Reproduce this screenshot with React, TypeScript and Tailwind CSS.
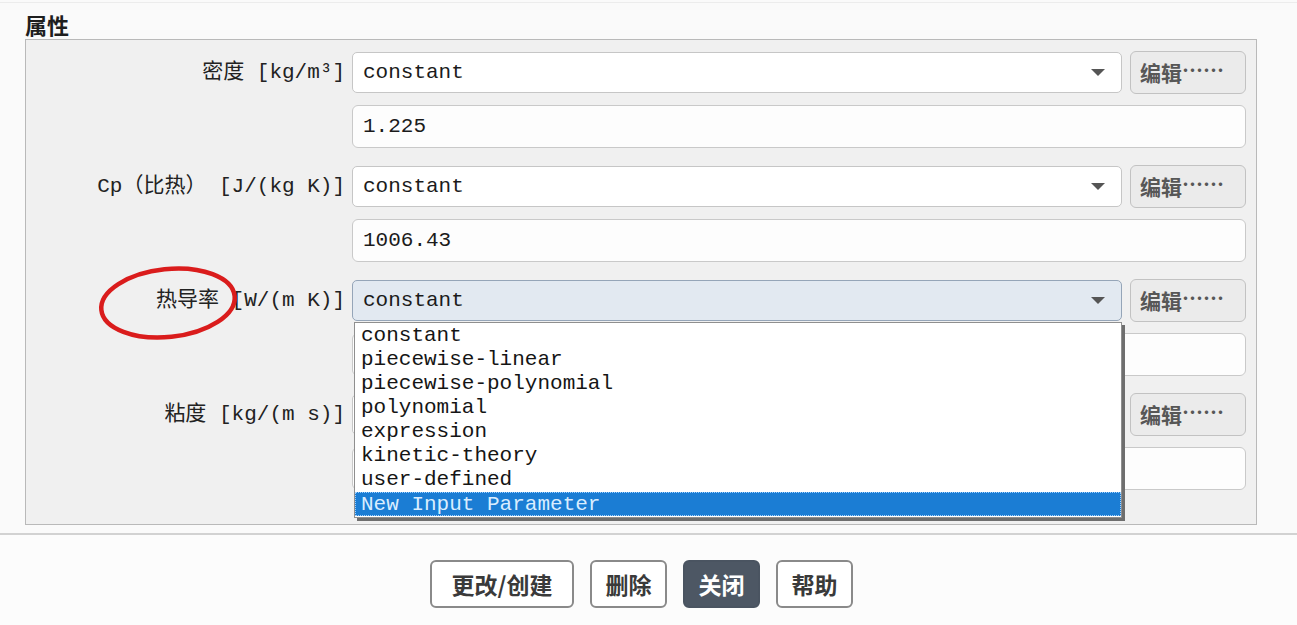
import React from "react";

const mono = { fontFamily: '"Liberation Mono", "Noto Sans CJK SC", monospace' };
const cjk = { fontFamily: '"Noto Sans CJK SC", "Liberation Sans", sans-serif' };

const options = [
  "constant",
  "piecewise-linear",
  "piecewise-polynomial",
  "polynomial",
  "expression",
  "kinetic-theory",
  "user-defined",
  "New Input Parameter",
];

const Arrow = () => (
  <svg width="16" height="9" viewBox="0 0 16 9" className="shrink-0">
    <path d="M1 1 L15 1 L8 8 Z" fill="#555" />
  </svg>
);

const SelectBox = ({ active, text = "constant" }: { active?: boolean; text?: string }) => (
  <div
    className={
      active
        ? "h-[41px] flex items-center justify-between pl-[10px] pr-[15px] rounded-[5px] border border-[#95a5b8] bg-[#e2e9f1]"
        : "h-[41px] flex items-center justify-between pl-[10px] pr-[15px] rounded-[5px] border border-[#c6c6c6] bg-white"
    }
  >
    <span className="text-[21px] text-[#1b1b1b]" style={mono}>
      {text}
    </span>
    <Arrow />
  </div>
);

const EditButton = () => (
  <button
    className="h-[43px] w-[116px] ml-[1px] flex items-center pl-[9px] rounded-[6px] border border-[#c2c2c2] bg-[#ebebeb] text-[21px] font-bold text-[#575757] leading-none"
    style={cjk}
  >
    编辑
    <span className="relative top-[-3px]">……</span>
  </button>
);

const ValueInput = ({ value }: { value: string }) => (
  <div className="col-start-2 col-span-2 h-[43px] flex items-center pl-[10px] rounded-[6px] border border-[#c9c9c9] bg-[#fdfdfd]">
    <span className="text-[21px] text-[#1b1b1b]" style={mono}>
      {value}
    </span>
  </div>
);

const Label = ({ children }: { children: React.ReactNode }) => (
  <div className="text-right text-[21px] text-[#222] whitespace-pre" style={mono}>
    {children}
  </div>
);

export default function App() {
  return (
    <div className="w-[1297px] h-[625px] overflow-hidden bg-[#fafafa] flex flex-col">
      <div className="h-[3px] border-b border-[#ececec]" />
      <div
        className="pl-[25px] pt-[6px] h-[36px] leading-[30px] text-[22px] font-bold text-[#1e1e1e]"
        style={cjk}
      >
        属性
      </div>

      {/* property group */}
      <div className="ml-[25px] w-[1232px] border border-[#b9b9b9] bg-[#f0f0f0] pt-[11px] pb-[34px] pr-[10px]">
        <div className="grid grid-cols-[319px_770px_117px] gap-x-[7px] items-center">
          <Label>密度 [kg/m³]</Label>
          <SelectBox />
          <EditButton />
          <div className="h-[11px] col-span-3" />
          <ValueInput value="1.225" />
          <div className="h-[17px] col-span-3" />

          <Label>Cp（比热） [J/(kg K)]</Label>
          <SelectBox />
          <EditButton />
          <div className="h-[11px] col-span-3" />
          <ValueInput value="1006.43" />
          <div className="h-[17px] col-span-3" />

          <div className="relative">
            <Label>热导率 [W/(m K)]</Label>
            {/* red annotation circle */}
            <svg
              width="146"
              height="80"
              viewBox="0 0 146 80"
              className="absolute left-[69px] top-[-22px] pointer-events-none"
            >
              <ellipse
                cx="73"
                cy="40"
                rx="67"
                ry="34"
                transform="rotate(-6 73 40)"
                fill="none"
                stroke="#da1c1c"
                strokeWidth="4.5"
              />
            </svg>
          </div>
          <div className="relative">
            <SelectBox active />
            {/* open dropdown list */}
            <div className="absolute left-[2px] top-[42px] w-[768px] z-10 bg-white border border-[#8f8f8f] shadow-[3px_3px_0_#6e6e6e] py-[1px]">
              {options.map((o, i) => (
                <div
                  key={o}
                  className={
                    i === options.length - 1
                      ? "h-[24px] leading-[24px] px-[5px] bg-[#1b7dd4] text-[#d9edff] border border-dotted border-[#9fd0ff]"
                      : "h-[24px] leading-[24px] px-[6px] text-[#151515]"
                  }
                  style={mono}
                >
                  <span className="text-[21px]">{o}</span>
                </div>
              ))}
            </div>
          </div>
          <EditButton />
          <div className="h-[11px] col-span-3" />
          <ValueInput value="" />
          <div className="h-[17px] col-span-3" />

          <Label>粘度 [kg/(m s)]</Label>
          <SelectBox text="" />
          <EditButton />
          <div className="h-[11px] col-span-3" />
          <ValueInput value="" />
        </div>
      </div>

      <div className="mt-[8px] border-t-2 border-[#d2d2d2] bg-[#fcfcfc] flex-1">
        <div className="flex justify-center gap-[16px] pt-[25px] pr-[14px]" style={cjk}>
          <button className="h-[48px] w-[144px] rounded-[6px] border-2 border-[#8a8a8a] bg-white text-[23px] font-bold text-[#3a3a3a]">
            更改/创建
          </button>
          <button className="h-[48px] w-[77px] rounded-[6px] border-2 border-[#8a8a8a] bg-white text-[23px] font-bold text-[#3a3a3a]">
            删除
          </button>
          <button className="h-[48px] w-[77px] rounded-[6px] border-2 border-[#4a5461] bg-[#4d5764] text-[23px] font-bold text-white">
            关闭
          </button>
          <button className="h-[48px] w-[77px] rounded-[6px] border-2 border-[#8a8a8a] bg-white text-[23px] font-bold text-[#3a3a3a]">
            帮助
          </button>
        </div>
      </div>
    </div>
  );
}
